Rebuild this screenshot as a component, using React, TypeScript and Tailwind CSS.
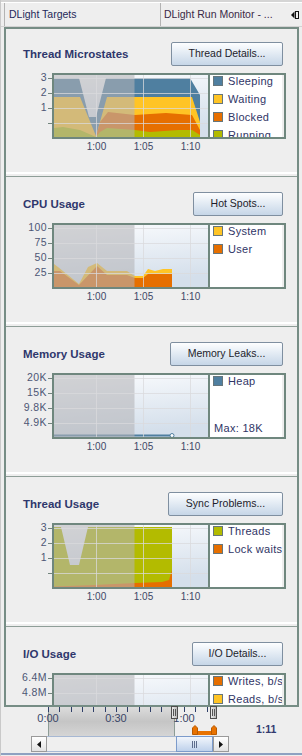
import type { ReactNode } from "react";

const SLEEP = "#4f7fa0";
const WAIT = "#ffc425";
const BLOCK = "#e66f00";
const RUN = "#b3bb00";

type LegendItem = { color: string; label: string };

function Plot({ id, children }: { id: string; children?: ReactNode }) {
  return (
    <svg width="154" height="62" viewBox="0 0 154 62" className="block shrink-0">
      <defs>
        <linearGradient id={id} x1="0" y1="0" x2="0.25" y2="1">
          <stop offset="0" stopColor="#fbfcfe" />
          <stop offset="1" stopColor="#d4dfeb" />
        </linearGradient>
      </defs>
      <rect width="154" height="62" fill={`url(#${id})`} />
      {children}
      {/* already-recorded part of the run */}
      <rect width="80.5" height="62" fill="#b4b4b6" opacity="0.58" />
      <g stroke="#d9dadc" strokeOpacity="0.75">
        {[3.5, 18.5, 33.5, 48.5].map((y) => (
          <line key={y} x1="0" x2="154" y1={y} y2={y} />
        ))}
        {[42.5, 89.5, 136.5].map((x) => (
          <line key={x} x1={x} x2={x} y1="0" y2="62" />
        ))}
      </g>
    </svg>
  );
}

type SectionProps = {
  title: string;
  button: string;
  buttonWidth: string;
  ticks: string[];
  legend: LegendItem[];
  note?: string;
  plotId: string;
  first?: boolean;
  children?: ReactNode;
};

function Section({ title, button, buttonWidth, ticks, legend, note, plotId, first, children }: SectionProps) {
  return (
    <section className={`flex shrink-0 flex-col ${first ? "h-[148px] pt-[13px]" : "h-[150px] pt-[15px]"}`}>
      <div className="flex h-[24px] items-center justify-between pl-[17px] pr-[14px]">
        <h2 className="pt-[2px] text-[11.5px] font-bold text-[#2e376c]">{title}</h2>
        <button
          className={`${buttonWidth} h-[24px] rounded-[2px] border border-[#7f8fa0] bg-gradient-to-b from-[#fdfeff] to-[#c6d6e7] text-[10.5px] text-[#1d1d2b]`}
        >
          {button}
        </button>
      </div>

      <div className="mt-[7px] flex items-start">
        <div className="-mt-[2.5px] flex w-[46px] flex-col">
          {ticks.map((t, i) => (
            <div key={i} className="flex h-[15px] items-center justify-end">
              <span className="text-[10.5px] tracking-[0.4px] text-[#4d5675]">{t}</span>
              <span className="ml-px h-px w-[4px] bg-[#71847c]" />
            </div>
          ))}
        </div>
        <div className="flex h-[66px] w-[234px] border-2 border-[#6f877e]">
          <Plot id={plotId}>{children}</Plot>
          <div className="flex w-[74px] flex-col gap-[8px] overflow-hidden border-l-2 border-[#6f877e] bg-white pl-[3px] pt-px">
            {legend.map((l) => (
              <div key={l.label} className="flex h-[10px] shrink-0 items-center gap-[5px]">
                <span className="size-[10px] shrink-0 border border-[#66767c]" style={{ backgroundColor: l.color }} />
                <span className="whitespace-nowrap text-[11px] leading-none tracking-[0.3px] text-[#2f3566]">{l.label}</span>
              </div>
            ))}
            {note && (
              <div className="mb-[3px] ml-px mt-auto text-[11px] leading-none tracking-[0.3px] text-[#2f3566]">{note}</div>
            )}
          </div>
        </div>
      </div>

      <div className="ml-[67px] flex h-[16px]">
        {["1:00", "1:05", "1:10"].map((l) => (
          <span key={l} className="w-[47px] text-center text-[10px] leading-[16px] text-[#3d4766]">
            {l}
          </span>
        ))}
      </div>

      <div className="flex-1" />
      <div className="h-[2px] bg-white" />
      <div className="mt-[2px] h-px bg-[#8f9e98]" />
    </section>
  );
}

function Handle({ className }: { className: string }) {
  return (
    <div
      className={`absolute top-[-1px] flex h-[13px] w-[7px] items-center justify-center gap-px border border-[#4e4e4e] bg-gradient-to-r from-[#ececec] to-[#b9b9b9] ${className}`}
    >
      <span className="h-[7px] w-px bg-[#555]" />
      <span className="h-[7px] w-px bg-[#555]" />
    </div>
  );
}

function Marker({ className }: { className: string }) {
  return (
    <svg className={`absolute top-[18px] ${className}`} width="6" height="10" viewBox="0 0 6 10">
      <path d="M0.5 9.5 V3 L3 0.5 L5.5 3 V9.5 Z" fill="#e87200" stroke="#b95a00" />
    </svg>
  );
}

function Timeline() {
  const ticks = Array.from({ length: 15 }, (_, i) => Math.round(47 + i * 11.33) + 0.5);
  return (
    <div className="flex h-[29px] shrink-0">
      <div className="relative h-full w-[229px]">
        <div className="absolute left-[47px] top-0 h-full w-[127px] border-x border-[#8d9c96] bg-gradient-to-b from-[#dcdcdc] via-[#c5c5c5] to-[#d5d5d5]" />
        <svg className="absolute left-0 top-0" width="229" height="6">
          {ticks.map((x) => (
            <line key={x} x1={x} x2={x} y1="0" y2="5" stroke="#2f3f68" />
          ))}
        </svg>
        <span className="absolute left-[27px] top-[4px] w-[40px] text-center text-[11px] leading-[14px] text-[#3a4668]">0:00</span>
        <span className="absolute left-[95px] top-[4px] w-[40px] text-center text-[11px] leading-[14px] text-[#3a4668]">0:30</span>
        <span className="absolute left-[163px] top-[4px] w-[40px] text-center text-[11px] leading-[14px] text-[#3a4668]">1:00</span>
        <Handle className="left-[170px]" />
        <Handle className="left-[209px]" />
        <div className="absolute left-[196px] top-[24px] h-[4px] w-[15px] bg-[#e87200]" />
        <Marker className="left-[191px]" />
        <Marker className="left-[210px]" />
      </div>
      <div className="pl-[26px] pt-[15px] text-[10.5px] font-bold leading-[14px] text-[#323a6e]">1:11</div>
    </div>
  );
}

function ScrollBar() {
  return (
    <div className="flex h-[16px] shrink-0 pl-[30px]">
      <div className="flex size-[16px] items-center justify-center border border-[#9a9a9a] bg-gradient-to-b from-white to-[#e2e2e2]">
        <svg width="4" height="7" viewBox="0 0 4 7">
          <path d="M4 0 V7 L0 3.5 Z" fill="#111" />
        </svg>
      </div>
      <div className="h-[16px] w-[129px] border-y border-[#a7b8d3] bg-[#efefef]" />
      <div className="flex h-[16px] w-[37px] items-center justify-center gap-px border border-[#7c9bcb] bg-gradient-to-b from-[#f2f6fc] to-[#bed1eb]">
        <span className="h-[7px] w-px bg-[#5d6c8c]" />
        <span className="h-[7px] w-px bg-[#5d6c8c]" />
        <span className="h-[7px] w-px bg-[#5d6c8c]" />
      </div>
      <div className="flex size-[16px] items-center justify-center border border-[#9a9a9a] bg-gradient-to-b from-white to-[#e2e2e2]">
        <svg width="4" height="7" viewBox="0 0 4 7">
          <path d="M0 0 V7 L4 3.5 Z" fill="#111" />
        </svg>
      </div>
    </div>
  );
}

export default function App() {
  return (
    <div className="flex h-[756px] w-[302px] flex-col overflow-hidden border-l border-[#c9c9c9] bg-[#eeeeee] font-['Liberation_Sans',Arial,sans-serif]">
      <div className="h-[2px] shrink-0 bg-[#d5d5d5]" />
      <div className="h-px shrink-0 bg-white" />
      <div className="flex h-[24px] shrink-0 items-center border-b border-[#d2d2d2]">
        <div className="ml-[3px] flex h-full w-[157px] items-center border-x border-[#b3b3b3] pl-[4px] text-[10.5px] text-[#24295a]">
          DLight Targets
        </div>
        <div className="flex h-full flex-1 items-center pl-[3px] text-[10.5px] text-[#3a2946]">DLight Run Monitor - ...</div>
        <svg className="mr-[3px]" width="8" height="8" viewBox="0 0 8 8">
          <path d="M0 4 L3.5 0.5 V7.5 Z" fill="#111" />
          <rect x="4.5" y="0.5" width="3" height="7" fill="none" stroke="#111" />
        </svg>
      </div>

      <div className="ml-[3px] flex h-[680px] w-[295px] shrink-0 flex-col overflow-hidden border-2 border-[#768d85]">
        <Section
          first
          title="Thread Microstates"
          button="Thread Details..."
          buttonWidth="w-[112px]"
          ticks={["3", "2", "1", ""]}
          plotId="g-micro"
          legend={[
            { color: SLEEP, label: "Sleeping" },
            { color: WAIT, label: "Waiting" },
            { color: BLOCK, label: "Blocked" },
            { color: RUN, label: "Running" },
          ]}
        >
          <path d="M0 3 L25 3 L35 42 L42 42 L52 3 L136 3 L146 20 L146 62 L0 62 Z" fill={SLEEP} />
          <path d="M0 22 L26 22 L42 61 L53 22 L138 22 L146 47 L146 62 L0 62 Z" fill={WAIT} />
          <path d="M42 62 L46 47 L54 37 L81 40 L96 39 L112 38 L138 40 L146 55 L146 62 Z" fill={BLOCK} />
          <path d="M0 53 L9 52 L26 55 L42 62 L46 57 L53 53 L81 55 L96 57 L110 56 L125 55 L138 55 L146 60 L146 62 L0 62 Z" fill={RUN} />
        </Section>

        <Section
          title="CPU Usage"
          button="Hot Spots..."
          buttonWidth="w-[90px]"
          ticks={["100", "75", "50", "25"]}
          plotId="g-cpu"
          legend={[
            { color: WAIT, label: "System" },
            { color: BLOCK, label: "User" },
          ]}
        >
          <path d="M0 39 L4 42 L25 59 L34 42 L43 38 L53 46 L73 46 L79 50 L81 51 L89 51 L94 44 L101 46 L109 44 L118 44 L118 62 L0 62 Z" fill={WAIT} />
          <path d="M0 46 L6 46 L25 60 L43 41 L53 50 L73 50 L81 53 L89 53 L94 49 L118 49 L118 62 L0 62 Z" fill={BLOCK} />
        </Section>

        <Section
          title="Memory Usage"
          button="Memory Leaks..."
          buttonWidth="w-[113px]"
          ticks={["20K", "15K", "9.8K", "4.9K"]}
          plotId="g-mem"
          legend={[{ color: SLEEP, label: "Heap" }]}
          note="Max:  18K"
        >
          <line x1="0" x2="118" y1="60.5" y2="60.5" stroke={SLEEP} strokeWidth="2" />
          <circle cx="118" cy="60.5" r="2" fill="#fff" stroke={SLEEP} />
        </Section>

        <Section
          title="Thread Usage"
          button="Sync Problems..."
          buttonWidth="w-[115px]"
          ticks={["3", "2", "1", ""]}
          plotId="g-threads"
          legend={[
            { color: RUN, label: "Threads" },
            { color: BLOCK, label: "Lock waits" },
          ]}
        >
          <path d="M0 2 L7 2 L16 40 L25 40 L34 2 L118 2 L118 62 L0 62 Z" fill={RUN} />
          <path d="M0 62 L0 61.5 L40 60 L81 58 L108 57 L115 55 L118 45 L118 62 Z" fill={BLOCK} />
        </Section>

        <Section
          title="I/O Usage"
          button="I/O Details..."
          buttonWidth="w-[91px]"
          ticks={["6.4M", "4.8M"]}
          plotId="g-io"
          legend={[
            { color: BLOCK, label: "Writes, b/s" },
            { color: WAIT, label: "Reads, b/s" },
          ]}
        />
      </div>

      <Timeline />
      <ScrollBar />
      <div className="h-px shrink-0" />
      <div className="h-[2px] shrink-0 bg-[#8ea1c1]" />
    </div>
  );
}
